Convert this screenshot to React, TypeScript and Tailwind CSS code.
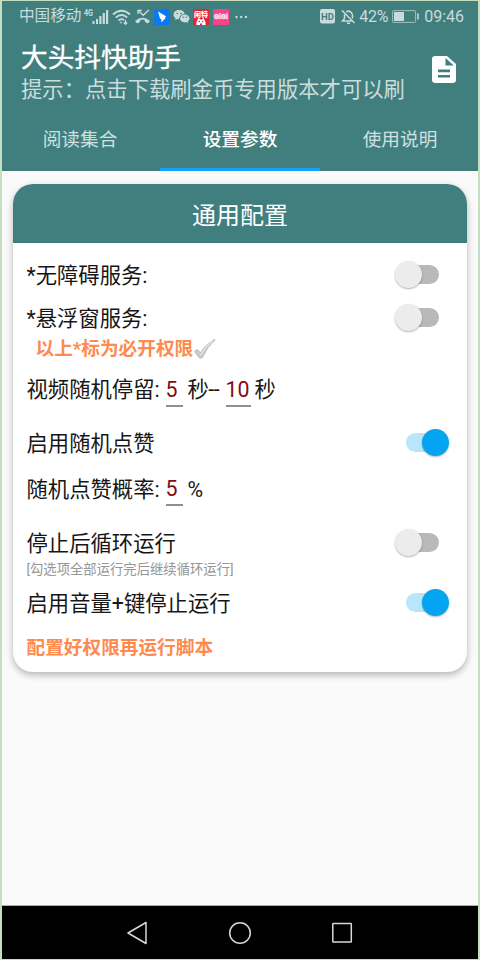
import { useState } from 'react';
import type { ReactNode } from 'react';

const tabs = ['阅读集合', '设置参数', '使用说明'];

function StatusBar() {
  return (
    <div className="flex h-[31px] items-center pl-[17px] pr-[14px] text-[#c9dcdc]">
      <span className="w-[63px] whitespace-nowrap pt-px text-[15.6px] leading-none">中国移动</span>
      <svg width="25" height="20" viewBox="0 0 25 20" fill="currentColor" className="ml-[2px]">
        <text x="0" y="8.500" fontSize="8.500" fontWeight="700" textLength="9" lengthAdjust="spacingAndGlyphs">4G</text>
        <path d="M8.500 14h2v3h-2zM12 12h2v5h-2zM15.300 9h2.200v8h-2.200zM18.700 6h2.200v11h-2.200zM22 3h2.200v14H22z" />
      </svg>
      <svg width="19" height="16" viewBox="0 0 19 16" fill="none" stroke="currentColor" strokeWidth="1.800" className="ml-[3px]">
        <path d="M1 5.500Q9.500-2 18 5.500M3.800 8.500Q9.500 3.500 15.200 8.500M6.500 11.500Q9.500 9 12 11" />
        <path d="M9 12.500v2M13.500 11v4M11.800 13.500l1.700 1.700 1.700-1.700" strokeWidth="1.300" />
      </svg>
      <svg width="17" height="15" viewBox="0 0 17 15" fill="none" stroke="currentColor" className="ml-[3px]">
        <path d="M4 5V1.300h4M4.200 1.500l5 4.800 5.600-5.300" strokeWidth="1.300" />
        <path d="M1 12Q8.500 5.500 16 12l-2.200 2.500-3-1.800V11q-2.300-.8-4.600 0v1.700l-3 1.800z" fill="currentColor" stroke="none" />
      </svg>
      <svg width="16" height="16" viewBox="0 0 16 16" className="ml-[3px]">
        <rect width="16" height="16" rx="2" fill="#0879f2" />
        <path d="M4 2.500l8 4.700-1 1.700.3.500-4.200 4 .5-3-1.600-.8z" fill="#fff" />
      </svg>
      <svg width="17" height="15" viewBox="0 0 17 15" fill="currentColor" className="ml-[3px]">
        <path d="M6.200 1C3 1 .6 3 .6 5.700c0 1.500.8 2.700 2 3.600L2 11l2.200-1.100 1.900.4C6 7 8.400 5 11.700 5 11.200 2.600 9 1 6.200 1z" />
        <ellipse cx="11.700" cy="9.500" rx="4.700" ry="3.900" />
        <path d="M13 12.500l2 1.700-.3-2.500z" />
        <g fill="#417f7f">
          <circle cx="4.300" cy="4.500" r=".8" />
          <circle cx="8" cy="4.500" r=".8" />
          <circle cx="10.200" cy="8.300" r=".7" />
          <circle cx="13.300" cy="8.300" r=".7" />
        </g>
      </svg>
      <svg width="16" height="16" viewBox="0 0 16 16" className="ml-[3px]">
        <rect width="16" height="16" rx="1.500" fill="#e8222f" />
        <text x="8" y="7.600" fontSize="7" fontWeight="900" fill="#fff" textAnchor="middle">闲特</text>
        <path d="M3.500 16c-.8-3 1-4.500 2-7.500l1.500 2h2l1.500-2c1 3 2.800 4.500 2 7.500z" fill="#fff" />
        <circle cx="6.300" cy="12.500" r=".7" fill="#444" />
        <circle cx="9.700" cy="12.500" r=".7" fill="#444" />
        <path d="M7 14.500h2V16H7z" fill="#e8222f" />
      </svg>
      <svg width="16" height="16" viewBox="0 0 16 16" className="ml-[4px]">
        <rect width="16" height="16" rx="1.500" fill="#f6438c" />
        <text x="8" y="10" fontSize="8" fontWeight="900" fill="#ffd9e8" stroke="#ffd9e8" strokeWidth=".5" textAnchor="middle" textLength="14" lengthAdjust="spacingAndGlyphs">GiGi</text>
      </svg>
      <svg width="13" height="4" viewBox="0 0 13 4" fill="currentColor" className="ml-[6px]">
        <circle cx="1.500" cy="2" r="1.200" />
        <circle cx="6.200" cy="2" r="1.200" />
        <circle cx="10.900" cy="2" r="1.200" />
      </svg>

      <div className="ml-auto flex items-center">
        <svg width="15" height="15" viewBox="0 0 15 15">
          <rect width="15" height="14.500" rx="2" fill="currentColor" />
          <text x="7.500" y="10.700" fontSize="9.500" fontWeight="700" fill="#417f7f" textAnchor="middle">HD</text>
        </svg>
        <svg width="15" height="16" viewBox="0 0 15 16" fill="none" stroke="currentColor" strokeWidth="1.500" className="ml-[6px]">
          <path d="M1 1.500l12.500 12.500M3.500 5.500v4L1.500 12h9M5.300 3.200Q7.500 1 9.800 3.200 11.500 4.500 11.500 7v2.500M6 14.300h3" />
        </svg>
        <span className="ml-[3px] w-[30px] pt-px text-[16px] leading-none tracking-[-0.2px]">42%</span>
        <svg width="28" height="13" viewBox="0 0 28 13" className="ml-[3px]">
          <rect x=".6" y=".6" width="23" height="11.800" rx="1" fill="none" stroke="currentColor" strokeWidth="1" opacity=".7" />
          <rect x="2" y="2" width="10" height="9" fill="currentColor" />
          <path d="M26 3.500v6" stroke="currentColor" strokeWidth="1.500" />
        </svg>
        <span className="ml-[4px] pt-px text-[16px] leading-none">09:46</span>
      </div>
    </div>
  );
}

function Switch({ label, defaultOn = false }: { label: string; defaultOn?: boolean }) {
  const [on, setOn] = useState(defaultOn);
  return (
    <button
      role="switch"
      aria-checked={on}
      aria-label={label}
      onClick={() => setOn(!on)}
      className="relative -mt-[2px] flex h-[27px] w-[54px] items-center justify-center"
    >
      <span className={`h-[19px] w-[33px] rounded-full ${on ? 'bg-[#b9e6fb]' : 'bg-[#b9b9b9]'}`} />
      <span
        className={`absolute top-0 size-[27px] rounded-full shadow-[0_1px_2px_rgba(0,0,0,0.3)] ${
          on ? 'right-0 bg-[#03a4f2]' : 'left-0 bg-[#ececec]'
        }`}
      />
    </button>
  );
}

function Row({ className, children }: { className: string; children: ReactNode }) {
  return <div className={`flex items-center whitespace-pre ${className}`}>{children}</div>;
}

function NumberField({ value, className }: { value: string; className: string }) {
  return (
    <span className={`-mt-[2px] flex h-[36px] items-center border-b-2 border-[#8f8f8f] pt-[4px] text-[#7f0d14] ${className}`}>
      {value}
    </span>
  );
}

export default function App() {
  const [active, setActive] = useState(1);

  return (
    <div className="flex h-[960px] w-[480px] flex-col overflow-hidden border-x-2 border-y border-[#c5dfc2] bg-[#fafafa] font-[Roboto,'Noto_Sans_CJK_SC',sans-serif]">
      <header className="flex h-[170px] shrink-0 flex-col bg-[#417f7f]">
        <StatusBar />
        <div className="flex h-[76px] items-center justify-between pl-[19px] pr-[22px]">
          <div>
            <h1 className="h-[34px] text-[26.67px] font-normal leading-[46px] text-white [-webkit-text-stroke:0.3px_white]">大头抖快助手</h1>
            <p className="h-[36px] text-[21.33px] leading-[42px] text-[#cadddd]">提示：点击下载刷金币专用版本才可以刷</p>
          </div>
          <svg width="24" height="27" viewBox="4 2 16 20" preserveAspectRatio="none" fill="#fff" className="-mt-[2px]">
            <path d="M14 2H6c-1.100 0-2 .9-2 2v16c0 1.100.9 2 2 2h12c1.100 0 2-.9 2-2V8l-6-6zm2 16H8v-2h8v2zm0-4H8v-2h8v2zm-3-5V3.500L18.500 9H13z" />
          </svg>
        </div>
        <nav className="-mx-[2px] flex flex-1">
          {tabs.map((tab, i) => (
            <button
              key={tab}
              onClick={() => setActive(i)}
              className={`flex flex-1 items-center justify-center border-b-[3px] pt-[3px] text-[18.67px] ${
                i === active ? 'border-[#14a0f5] font-medium text-white' : 'border-transparent text-[#cfe0e0]'
              }`}
            >
              {tab}
            </button>
          ))}
        </nav>
      </header>

      <main className="flex-1 px-[11px] pt-[13px]">
        <section className="h-[488px] overflow-hidden rounded-[20px] bg-white text-[21.33px] leading-none text-[#161616] shadow-[0_3px_7px_rgba(0,0,0,0.28)]">
          <h2 className="flex h-[59px] items-center justify-center bg-[#417f7f] pt-[5px] text-[24px] text-white">
            通用配置
          </h2>
          <div className="pl-[13.500px] pr-[18px] pt-[11px]">
            <Row className="h-[43px] justify-between">
              <span>*无障碍服务:</span>
              <Switch label="无障碍服务" />
            </Row>
            <Row className="h-[42px] justify-between">
              <span className="pt-px">*悬浮窗服务:</span>
              <Switch label="悬浮窗服务" />
            </Row>
            <Row className="h-[19px] pl-[9px] text-[18.67px] font-bold text-[#ff8a50]">
              <span className="pt-[2px]">以上*标为必开权限</span>
              <svg width="23" height="22" viewBox="0 0 23 22">
                <path d="M1.500 13.500Q3.500 10.500 5 12l2.500 3Q12 7 21 1.500q1.500-.3.500 1Q14 9 9.500 19.500q-2 1.500-3.500 0z" fill="#c9cdd0" stroke="#a5aaad" strokeWidth=".7" />
                <path d="M7.500 17.500Q12 9 20 2.500" fill="none" stroke="#e6e8e9" strokeWidth="1.200" />
              </svg>
            </Row>
            <Row className="h-[63px]">
              <span className="w-[139px] pt-px">视频随机停留:</span>
              <NumberField value="5" className="w-[17px]" />
              <span className="ml-[5px] w-[38px] pt-px tracking-[-0.5px]">秒--</span>
              <NumberField value="10" className="w-[25px]" />
              <span className="ml-[4px] pt-px">秒</span>
            </Row>
            <Row className="h-[44px] justify-between">
              <span className="pt-px">启用随机点赞</span>
              <Switch label="启用随机点赞" defaultOn />
            </Row>
            <Row className="h-[48px]">
              <span className="w-[139px] pt-px">随机点赞概率:</span>
              <NumberField value="5" className="w-[17px]" />
              <span className="ml-[5px] pt-px">%</span>
            </Row>
            <Row className="mt-[12px] h-[36px] justify-between">
              <span className="pt-px">停止后循环运行</span>
              <Switch label="停止后循环运行" />
            </Row>
            <Row className="h-[17px] text-[13.33px] text-[#969696]">[勾选项全部运行完后继续循环运行]</Row>
            <Row className="h-[51px] justify-between">
              <span className="pt-px">启用音量+键停止运行</span>
              <Switch label="启用音量+键停止运行" defaultOn />
            </Row>
            <Row className="h-[38px] text-[18.67px] font-bold text-[#ff8a50]">配置好权限再运行脚本</Row>
          </div>
        </section>
      </main>

      <footer className="flex h-[54px] shrink-0 items-center justify-center gap-[80px] border-t border-[#9fb59d] bg-black">
        <svg width="22" height="24" viewBox="0 0 22 24" fill="none" stroke="#d8d8d8" strokeWidth="1.500" strokeLinejoin="round">
          <path d="M20 1.500v21L2 12z" />
        </svg>
        <svg width="24" height="24" viewBox="0 0 24 24" fill="none" stroke="#d8d8d8" strokeWidth="1.500">
          <circle cx="12" cy="12" r="10.300" />
        </svg>
        <svg width="22" height="22" viewBox="0 0 22 22" fill="none" stroke="#d8d8d8" strokeWidth="1.500">
          <rect x=".8" y="1.500" width="18.500" height="18.500" rx=".5" />
        </svg>
      </footer>
    </div>
  );
}
